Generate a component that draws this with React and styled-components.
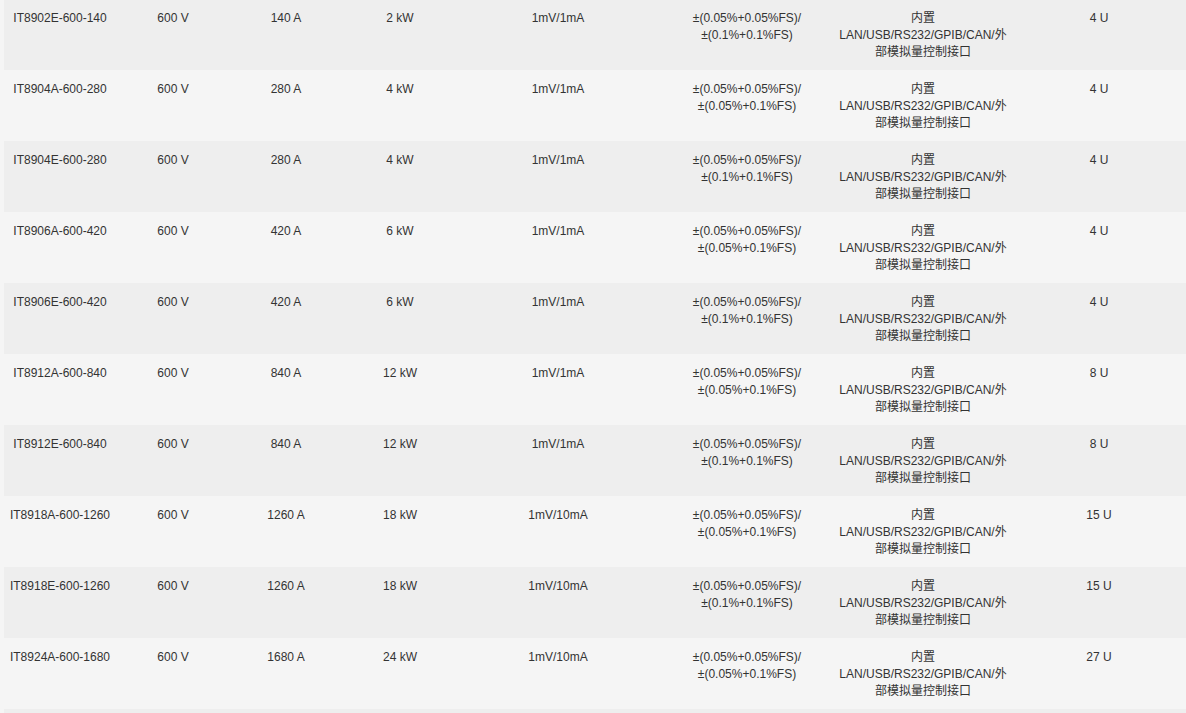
import React from "react";
import styled, { createGlobalStyle } from "styled-components";

const GlobalStyle = createGlobalStyle`
  html, body {
    margin: 0;
    padding: 0;
    background: #f5f5f5;
    overflow: hidden;
  }
`;

const Page = styled.div`
  padding-left: 4px;
  margin-top: -1px;
  font-family: "Liberation Sans", Arial, "Noto Sans CJK SC", sans-serif;
  font-size: 12px;
  line-height: 17px;
  color: #333;
`;

const Table = styled.table`
  width: 1184px;
  table-layout: fixed;
  border-collapse: collapse;
  border-spacing: 0;
`;

const Row = styled.tr`
  background: ${(p) => (p.$odd ? "#eeeeee" : "#f5f5f5")};
`;

const Cell = styled.td`
  width: ${(p) => p.$w}px;
  padding: 11px 0 9px;
  text-align: center;
  vertical-align: top;
  white-space: nowrap;
`;

const Filler = styled.td`
  height: 40px;
  padding: 0;
`;

const widths = [112, 114, 112, 116, 200, 178, 174, 178];

const rows = [
  ["IT8902E-600-140", "600 V", "140 A", "2 kW", "1mV/1mA", "E", "4 U"],
  ["IT8904A-600-280", "600 V", "280 A", "4 kW", "1mV/1mA", "A", "4 U"],
  ["IT8904E-600-280", "600 V", "280 A", "4 kW", "1mV/1mA", "E", "4 U"],
  ["IT8906A-600-420", "600 V", "420 A", "6 kW", "1mV/1mA", "A", "4 U"],
  ["IT8906E-600-420", "600 V", "420 A", "6 kW", "1mV/1mA", "E", "4 U"],
  ["IT8912A-600-840", "600 V", "840 A", "12 kW", "1mV/1mA", "A", "8 U"],
  ["IT8912E-600-840", "600 V", "840 A", "12 kW", "1mV/1mA", "E", "8 U"],
  ["IT8918A-600-1260", "600 V", "1260 A", "18 kW", "1mV/10mA", "A", "15 U"],
  ["IT8918E-600-1260", "600 V", "1260 A", "18 kW", "1mV/10mA", "E", "15 U"],
  ["IT8924A-600-1680", "600 V", "1680 A", "24 kW", "1mV/10mA", "A", "27 U"],
];

function Accuracy({ type }) {
  return (
    <>
      ±(0.05%+0.05%FS)/
      <br />
      {type === "A" ? "±(0.05%+0.1%FS)" : "±(0.1%+0.1%FS)"}
    </>
  );
}

function Interface() {
  return (
    <>
      内置
      <br />
      LAN/USB/RS232/GPIB/CAN/外
      <br />
      部模拟量控制接口
    </>
  );
}

export default function App() {
  return (
    <>
      <GlobalStyle />
      <Page>
        <Table>
          <tbody>
            {rows.map((r, i) => (
              <Row key={r[0]} $odd={i % 2 === 0}>
                <Cell $w={widths[0]}>{r[0]}</Cell>
                <Cell $w={widths[1]}>{r[1]}</Cell>
                <Cell $w={widths[2]}>{r[2]}</Cell>
                <Cell $w={widths[3]}>{r[3]}</Cell>
                <Cell $w={widths[4]}>{r[4]}</Cell>
                <Cell $w={widths[5]}>
                  <Accuracy type={r[5]} />
                </Cell>
                <Cell $w={widths[6]}>
                  <Interface />
                </Cell>
                <Cell $w={widths[7]}>{r[6]}</Cell>
              </Row>
            ))}
            <Row $odd>
              <Filler colSpan={8} />
            </Row>
          </tbody>
        </Table>
      </Page>
    </>
  );
}
